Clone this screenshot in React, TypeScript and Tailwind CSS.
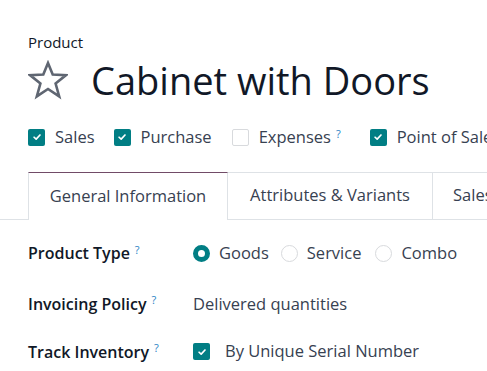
import type { ReactNode } from "react";

const FONT = { fontFamily: '"Open Sans", "Noto Sans", sans-serif' };

function Check({ checked = true }: { checked?: boolean }) {
  if (!checked) {
    return <span className="h-[17px] w-[17px] shrink-0 rounded-[2px] border border-[#d8dadd] bg-white" />;
  }
  return (
    <span className="flex h-[17px] w-[17px] shrink-0 items-center justify-center rounded-[2px] bg-[#017e84]">
      <svg viewBox="0 0 12 12" className="h-[10px] w-[10px]">
        <path d="M2.5 6.3 L5 8.6 L9.6 3.6" fill="none" stroke="white" strokeWidth="2" strokeLinecap="round" strokeLinejoin="round" />
      </svg>
    </span>
  );
}

function Radio({ on = false }: { on?: boolean }) {
  return on ? (
    <span className="h-[17px] w-[17px] shrink-0 rounded-full border-[5px] border-[#017e84] bg-white" />
  ) : (
    <span className="h-[17px] w-[17px] shrink-0 rounded-full border border-[#d8dadd] bg-white" />
  );
}

function Help() {
  return <sup className="ml-[5px] text-[11px] font-normal text-[#2a83c4]">?</sup>;
}

function Row({ label, children }: { label: string; children: ReactNode }) {
  return (
    <div className="flex items-center">
      <div className="w-[165px] shrink-0 text-[16px] font-semibold text-[#111827]">
        {label}
        <Help />
      </div>
      <div className="flex items-center text-[16.5px] text-[#374151]">{children}</div>
    </div>
  );
}

export default function App() {
  return (
    <div className="h-[371px] w-[487px] overflow-hidden whitespace-nowrap bg-white" style={FONT}>
      <div className="px-[28px] pt-[32px]">
        <div className="text-[15px] font-medium leading-[20px] text-[#111827]">Product</div>
        <div className="mt-[6px] flex items-center">
          <svg viewBox="0 0 40 40" className="h-[40px] w-[40px] shrink-0">
            <polygon
              points="20,3 24.7,14.5 38,15.1 27.6,23.5 31.2,36.4 20,29 8.8,36.4 12.4,23.5 2,15.1 15.3,14.5"
              fill="none"
              stroke="#5f6672"
              strokeWidth="2.6"
              strokeLinejoin="miter"
            />
          </svg>
          <h1 className="ml-[23px] text-[38px] font-normal leading-[44px] text-[#111827]">Cabinet with Doors</h1>
        </div>
        <div className="mt-[23px] flex items-center gap-[10px] text-[16.5px] text-[#374151]">
          <Check />
          <span className="mr-[9px]">Sales</span>
          <Check />
          <span className="mr-[10px]">Purchase</span>
          <Check checked={false} />
          <span className="mr-[19px]">
            Expenses
            <Help />
          </span>
          <Check />
          <span>Point of Sale</span>
        </div>
      </div>

      <div className="mt-[22px] flex border-b border-[#dee2e6] pl-[28px] text-[16.5px] text-[#374151]">
        <div className="-mb-px flex h-[48px] w-[200px] shrink-0 items-center justify-center border-x border-t border-x-[#dee2e6] border-t-[#714b67] bg-white">
          General Information
        </div>
        <div className="flex h-[47px] w-[205px] shrink-0 items-center justify-center border-r border-t border-[#dee2e6]">
          Attributes &amp; Variants
        </div>
        <div className="flex h-[47px] shrink-0 items-center border-t border-[#dee2e6] pl-[20px] pr-[20px]">
          Sales
        </div>
      </div>

      <div className="flex flex-col px-[28px] pt-[21px]">
        <Row label="Product Type">
          <Radio on />
          <span className="ml-[9px] mr-[12px]">Goods</span>
          <Radio />
          <span className="ml-[9px] mr-[14px]">Service</span>
          <Radio />
          <span className="ml-[9px]">Combo</span>
        </Row>
        <div className="mt-[26px]">
          <Row label="Invoicing Policy">
            <span>Delivered quantities</span>
          </Row>
        </div>
        <div className="mt-[23px]">
          <Row label="Track Inventory">
            <Check />
            <span className="ml-[15px]">By Unique Serial Number</span>
          </Row>
        </div>
      </div>
    </div>
  );
}
